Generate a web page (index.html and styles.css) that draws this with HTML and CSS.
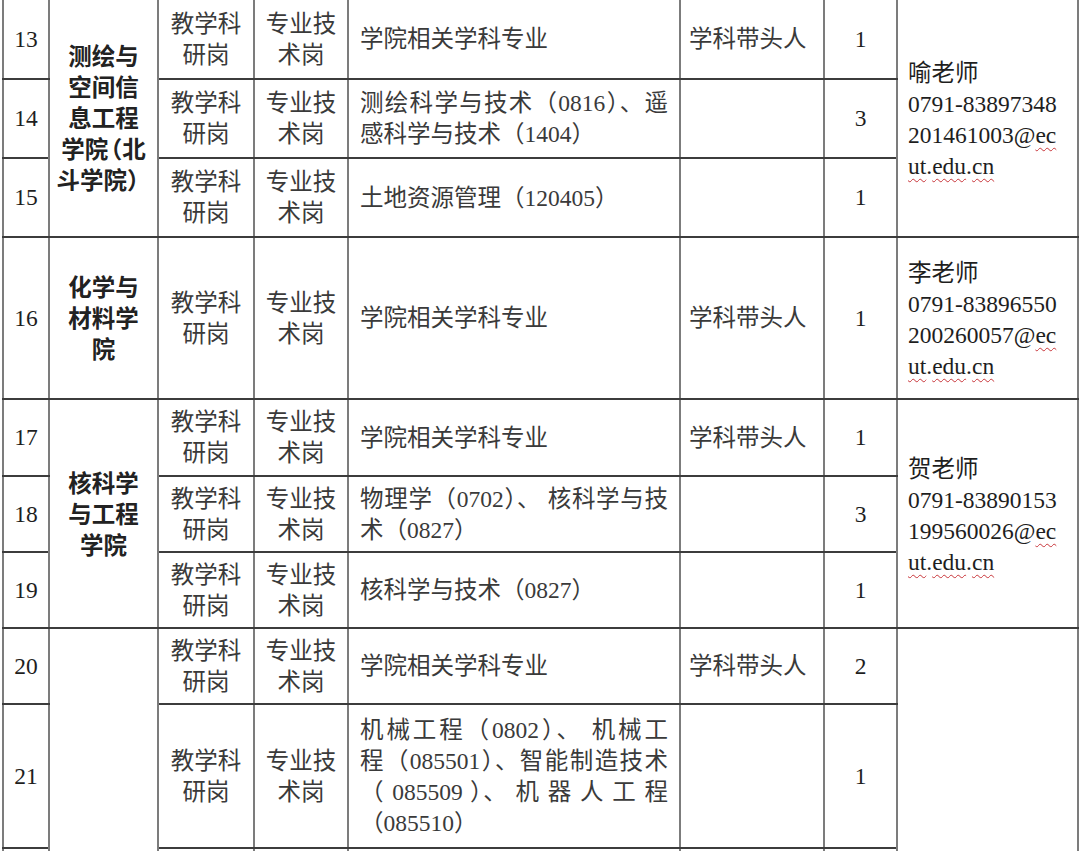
FILE: index.html
```html
<!DOCTYPE html>
<html lang="zh-CN">
<head>
<meta charset="utf-8">
<title>岗位表</title>
<link rel="stylesheet" href="styles.css">
</head>
<body>
<table class="jobs">
  <colgroup>
    <col class="c-no"><col class="c-college"><col class="c-type"><col class="c-kind">
    <col class="c-major"><col class="c-note"><col class="c-num"><col class="c-contact">
  </colgroup>
  <tbody>
    <tr class="r79 first">
      <td class="no">13</td>
      <td class="college" rowspan="3">测绘与<br>空间信<br>息工程<br>学<span class="tight">院</span>（北<br>斗学院）</td>
      <td class="center">教学科<br>研岗</td>
      <td class="center">专业技<br>术岗</td>
      <td class="left">学院相关学科专业</td>
      <td class="note">学科带头人</td>
      <td class="no">1</td>
      <td class="contact" rowspan="3">喻老师<br>0791-83897348<br>201461003@<span class="sp">ec</span><br><span class="sp">ut</span>.<span class="sp">edu</span>.<span class="sp">cn</span></td>
    </tr>
    <tr class="r79">
      <td class="no">14</td>
      <td class="center">教学科<br>研岗</td>
      <td class="center">专业技<br>术岗</td>
      <td class="left"><span class="jl">测绘科学与技术（0816）、遥</span><span class="ll">感科学与技术（1404）</span></td>
      <td class="note"></td>
      <td class="no">3</td>
    </tr>
    <tr class="r79">
      <td class="no">15</td>
      <td class="center">教学科<br>研岗</td>
      <td class="center">专业技<br>术岗</td>
      <td class="left">土地资源管理（120405）</td>
      <td class="note"></td>
      <td class="no">1</td>
    </tr>
    <tr class="r162">
      <td class="no">16</td>
      <td class="college">化学与<br>材料学<br>院</td>
      <td class="center">教学科<br>研岗</td>
      <td class="center">专业技<br>术岗</td>
      <td class="left">学院相关学科专业</td>
      <td class="note">学科带头人</td>
      <td class="no">1</td>
      <td class="contact">李老师<br>0791-83896550<br>200260057@<span class="sp">ec</span><br><span class="sp">ut</span>.<span class="sp">edu</span>.<span class="sp">cn</span></td>
    </tr>
    <tr class="r77">
      <td class="no">17</td>
      <td class="college" rowspan="3">核科学<br>与工程<br>学院</td>
      <td class="center">教学科<br>研岗</td>
      <td class="center">专业技<br>术岗</td>
      <td class="left">学院相关学科专业</td>
      <td class="note">学科带头人</td>
      <td class="no">1</td>
      <td class="contact" rowspan="3">贺老师<br>0791-83890153<br>199560026@<span class="sp">ec</span><br><span class="sp">ut</span>.<span class="sp">edu</span>.<span class="sp">cn</span></td>
    </tr>
    <tr class="r76">
      <td class="no">18</td>
      <td class="center">教学科<br>研岗</td>
      <td class="center">专业技<br>术岗</td>
      <td class="left"><span class="jl">物理学（0702）、 核科学与技</span><span class="ll">术（0827）</span></td>
      <td class="note"></td>
      <td class="no">3</td>
    </tr>
    <tr class="r76">
      <td class="no">19</td>
      <td class="center">教学科<br>研岗</td>
      <td class="center">专业技<br>术岗</td>
      <td class="left">核科学与技术（0827）</td>
      <td class="note"></td>
      <td class="no">1</td>
    </tr>
    <tr class="r76">
      <td class="no">20</td>
      <td class="college" rowspan="3"></td>
      <td class="center">教学科<br>研岗</td>
      <td class="center">专业技<br>术岗</td>
      <td class="left">学院相关学科专业</td>
      <td class="note">学科带头人</td>
      <td class="no">2</td>
      <td class="contact" rowspan="3"></td>
    </tr>
    <tr class="r144">
      <td class="no">21</td>
      <td class="center">教学科<br>研岗</td>
      <td class="center">专业技<br>术岗</td>
      <td class="left">
        <span class="jl">机械工程（0802）、 机械工</span>
        <span class="jl">程（085501）、智能制造技术</span>
        <span class="jl">（ 085509 ）、 机 器 人 工 程</span>
        <span class="ll">（085510）</span>
      </td>
      <td class="note"></td>
      <td class="no">1</td>
    </tr>
    <tr class="r60">
      <td class="no"></td>
      <td class="center"></td>
      <td class="center"></td>
      <td class="left"></td>
      <td class="note"></td>
      <td class="no"></td>
    </tr>
  </tbody>
</table>
</body>
</html>
```

FILE: styles.css
```css
html, body {
  margin: 0;
  padding: 0;
  background: #ffffff;
  overflow: hidden;
}

body {
  width: 1080px;
  height: 851px;
}

.jobs {
  margin-left: 2px;
  width: 1077px;
  table-layout: fixed;
  border-collapse: collapse;
  font-family: "Liberation Serif", "Noto Sans CJK SC", serif;
  font-size: 23.5px;
  font-weight: 400;
  line-height: 31px;
  color: #3a3a3a;
}

.c-no { width: 46px; }
.c-college { width: 109px; }
.c-type { width: 96px; }
.c-kind { width: 94px; }
.c-major { width: 332px; }
.c-note { width: 144px; }
.c-num { width: 73px; }
.c-contact { width: 181px; }

.jobs td {
  border-top: 2px solid #3c3c3c;
  border-bottom: 2px solid #3c3c3c;
  border-left: 2px solid #7c7c7c;
  border-right: 2px solid #7c7c7c;
  padding: 0;
  vertical-align: middle;
  overflow: visible;
  white-space: nowrap;
}

.jobs tr.first td {
  border-top: hidden;
}

.r79 { height: 79px; }
.r162 { height: 162px; }
.r77 { height: 77px; }
.r76 { height: 76px; }
.r144 { height: 144px; }
.r60 { height: 60px; }

.no {
  text-align: center;
  color: #1e1e1e;
}

.center {
  text-align: center;
  padding-top: 1px !important;
}

.left {
  text-align: left;
  padding-left: 11px !important;
  padding-top: 1px !important;
}

.note {
  text-align: left;
  padding-left: 8px !important;
  padding-top: 1px !important;
}

.college {
  text-align: center;
  font-weight: 700;
  color: #222222;
  padding-top: 3px !important;
}

.tight {
  letter-spacing: -0.4em;
}

.contact {
  text-align: left;
  padding-left: 10px !important;
  padding-top: 4px !important;
  color: #1e1e1e;
}

.sp {
  text-decoration: underline wavy #c8353a;
  text-decoration-thickness: 1px;
  text-underline-offset: 4px;
}

.jl {
  display: block;
  width: 308px;
  white-space: normal;
  text-align: justify;
  text-align-last: justify;
  text-justify: inter-character;
}

.ll {
  display: block;
}
```
